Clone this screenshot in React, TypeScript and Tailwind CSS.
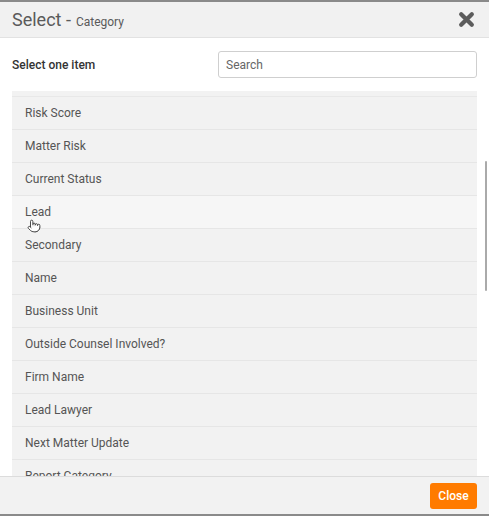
import { Pointer } from 'lucide-react';

const items = [
  'Risk Score',
  'Matter Risk',
  'Current Status',
  'Lead',
  'Secondary',
  'Name',
  'Business Unit',
  'Outside Counsel Involved?',
  'Firm Name',
  'Lead Lawyer',
  'Next Matter Update',
  'Report Category',
];

export default function App() {
  return (
    <div
      className="w-[489px] h-[516px] flex flex-col bg-white border-t-2 border-b-2 border-[#8a8a8a] overflow-hidden"
      style={{ fontFamily: 'Roboto, "Liberation Sans", sans-serif' }}
    >
      {/* Header */}
      <div className="h-[36px] flex-shrink-0 flex items-center justify-between pl-[12px] pr-[14px] bg-[#f1f1f1] border-b border-[#e2e2e2]">
        <div className="text-[#5a5a5a] flex items-baseline">
          <span className="text-[18px]">Select -</span>
          <span className="text-[12px] ml-[5px]">Category</span>
        </div>
        <svg width="17" height="17" viewBox="0 0 16 16" className="text-[#5c5c5c]">
          <path d="M3 3 L13 13 M13 3 L3 13" stroke="currentColor" strokeWidth="4" strokeLinecap="round" />
        </svg>
      </div>

      {/* Body */}
      <div className="flex-1 relative overflow-hidden px-[12px]">
        <div className="flex items-center justify-between mt-[13px] h-[27px]">
          <span className="text-[12px] font-medium text-[#333]">Select one item</span>
          <input
            placeholder="Search"
            className="w-[259px] h-[27px] border border-[#cfcfcf] rounded-[3px] px-[7px] text-[12px] text-[#555] placeholder:text-[#666] outline-none"
          />
        </div>

        <div className="mt-[13px] bg-[#f2f2f2]">
          <div className="h-[6px] border-b border-[#e8e8e8]" />
          {items.map((item) => (
            <div
              key={item}
              className={`relative h-[33px] flex items-center pl-[13px] text-[12px] text-[#555] border-b border-[#e6e6e6] ${
                item === 'Lead' ? 'bg-[#f6f6f6]' : ''
              }`}
            >
              {item}
              {item === 'Lead' && (
                <Pointer size={14} strokeWidth={1.5} className="absolute left-[15px] top-[23px] text-[#333] fill-white" />
              )}
            </div>
          ))}
        </div>

        {/* scrollbar thumb */}
        <div className="absolute right-[2px] top-[123px] w-[2px] h-[130px] bg-[#aaaaaa] rounded-full" />
      </div>

      {/* Footer */}
      <div className="h-[38px] flex-shrink-0 flex items-center justify-end pr-[12px] bg-[#f2f2f2] border-t border-[#dcdcdc]">
        <button className="w-[47px] h-[26px] bg-[#ff7b00] rounded-[3px] text-white text-[12px] font-medium">
          Close
        </button>
      </div>
    </div>
  );
}
